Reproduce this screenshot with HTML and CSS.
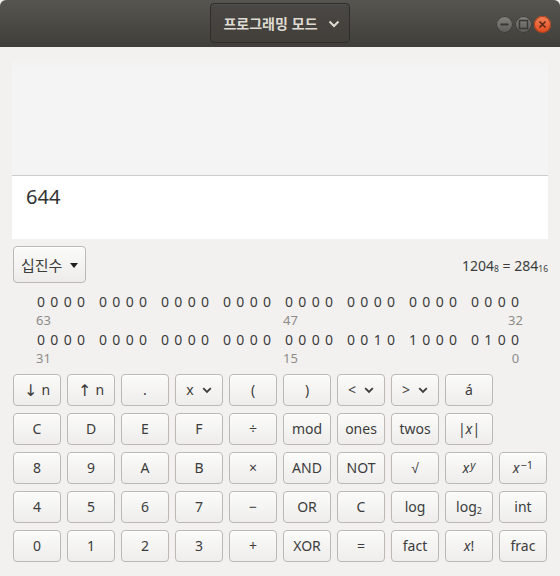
FILE: index.html
```html
<!DOCTYPE html>
<html lang="ko">
<head>
<meta charset="utf-8">
<link rel="stylesheet" href="styles.css">
</head>
<body>
<div class="window">
  <header class="titlebar">
    <div class="title-btn">
      <span class="title-text">프로그래밍 모드</span>
      <svg class="title-chev" width="12" height="8" viewBox="0 0 12 8"><path d="M1.5 1.5 L6 6 L10.5 1.5" fill="none" stroke="#dfdbd2" stroke-width="2"/></svg>
    </div>
    <div class="wm">
      <span class="wm-btn wm-grey"><svg width="17" height="17" viewBox="0 0 17 17"><path d="M4.5 8.5 H12.5" stroke="#3a3935" stroke-width="2"/></svg></span>
      <span class="wm-btn wm-grey"><svg width="17" height="17" viewBox="0 0 17 17"><rect x="4.5" y="4.5" width="8" height="8" fill="none" stroke="#3a3935" stroke-width="1.5"/></svg></span>
      <span class="wm-btn wm-close"><svg width="17" height="17" viewBox="0 0 17 17"><path d="M5.5 5.5 L11.5 11.5 M11.5 5.5 L5.5 11.5" stroke="#5a2a17" stroke-width="1.6"/></svg></span>
    </div>
  </header>

  <main class="content">
    <section class="display">
      <div class="history"></div>
      <div class="entry">644</div>
    </section>

    <div class="base-row">
      <div class="base-btn">십진수<span class="tri"></span></div>
      <div class="conv">1204<sub>8</sub> = 284<sub>16</sub></div>
    </div>

    <div class="bits">
      <div class="bit-row">
        <span class="grp"><i>0</i><i>0</i><i>0</i><i>0</i></span><span class="grp"><i>0</i><i>0</i><i>0</i><i>0</i></span><span class="grp"><i>0</i><i>0</i><i>0</i><i>0</i></span><span class="grp"><i>0</i><i>0</i><i>0</i><i>0</i></span><span class="grp"><i>0</i><i>0</i><i>0</i><i>0</i></span><span class="grp"><i>0</i><i>0</i><i>0</i><i>0</i></span><span class="grp"><i>0</i><i>0</i><i>0</i><i>0</i></span><span class="grp"><i>0</i><i>0</i><i>0</i><i>0</i></span>
      </div>
      <div class="lbl-row"><span>63</span><span>47</span><span class="r">32</span></div>
      <div class="bit-row">
        <span class="grp"><i>0</i><i>0</i><i>0</i><i>0</i></span><span class="grp"><i>0</i><i>0</i><i>0</i><i>0</i></span><span class="grp"><i>0</i><i>0</i><i>0</i><i>0</i></span><span class="grp"><i>0</i><i>0</i><i>0</i><i>0</i></span><span class="grp"><i>0</i><i>0</i><i>0</i><i>0</i></span><span class="grp"><i>0</i><i>0</i><i>1</i><i>0</i></span><span class="grp"><i>1</i><i>0</i><i>0</i><i>0</i></span><span class="grp"><i>0</i><i>1</i><i>0</i><i>0</i></span>
      </div>
      <div class="lbl-row"><span>31</span><span>15</span><span class="r">0</span></div>
    </div>

    <div class="keys">
      <button class="key"><span class="arrow">↓</span>n</button>
      <button class="key"><span class="arrow">↑</span>n</button>
      <button class="key">.</button>
      <button class="key">x <svg class="chev" width="10" height="7" viewBox="0 0 10 7"><path d="M1.2 1.2 L5 5 L8.8 1.2" fill="none" stroke="#3c3c3c" stroke-width="1.8"/></svg></button>
      <button class="key">(</button>
      <button class="key">)</button>
      <button class="key">&lt; <svg class="chev" width="10" height="7" viewBox="0 0 10 7"><path d="M1.2 1.2 L5 5 L8.8 1.2" fill="none" stroke="#3c3c3c" stroke-width="1.8"/></svg></button>
      <button class="key">&gt; <svg class="chev" width="10" height="7" viewBox="0 0 10 7"><path d="M1.2 1.2 L5 5 L8.8 1.2" fill="none" stroke="#3c3c3c" stroke-width="1.8"/></svg></button>
      <button class="key">á</button>
      <span class="blank"></span>

      <button class="key">C</button>
      <button class="key">D</button>
      <button class="key">E</button>
      <button class="key">F</button>
      <button class="key">÷</button>
      <button class="key">mod</button>
      <button class="key">ones</button>
      <button class="key">twos</button>
      <button class="key">|<em>x</em>|</button>
      <span class="blank"></span>

      <button class="key">8</button>
      <button class="key">9</button>
      <button class="key">A</button>
      <button class="key">B</button>
      <button class="key">×</button>
      <button class="key">AND</button>
      <button class="key">NOT</button>
      <button class="key">√</button>
      <button class="key"><em>x</em><sup><em>y</em></sup></button>
      <button class="key"><em>x</em><sup>−1</sup></button>

      <button class="key">4</button>
      <button class="key">5</button>
      <button class="key">6</button>
      <button class="key">7</button>
      <button class="key">−</button>
      <button class="key">OR</button>
      <button class="key">C</button>
      <button class="key">log</button>
      <button class="key">log<small>2</small></button>
      <button class="key">int</button>

      <button class="key">0</button>
      <button class="key">1</button>
      <button class="key">2</button>
      <button class="key">3</button>
      <button class="key">+</button>
      <button class="key">XOR</button>
      <button class="key">=</button>
      <button class="key">fact</button>
      <button class="key"><em>x</em>!</button>
      <button class="key">frac</button>
    </div>
  </main>
</div>
</body>
</html>
```

FILE: styles.css
```css
* { box-sizing: border-box; }
html, body { margin: 0; padding: 0; }
body {
  width: 560px;
  height: 576px;
  overflow: hidden;
  background: #f2f1f0;
  font-family: "Noto Sans", "Noto Sans CJK KR", sans-serif;
  color: #3c3c3c;
}
.window { width: 560px; height: 576px; background: #f2f1f0; }

.titlebar {
  height: 47px;
  background: linear-gradient(#57554f, #3f3e3a);
  border-radius: 6px 6px 0 0;
  display: flex;
  align-items: center;
  justify-content: center;
  position: relative;
}
.title-btn {
  width: 140px;
  height: 40px;
  margin-top: -1px;
  margin-left: -1px;
  border: 1px solid #2e2d2a;
  border-radius: 4px;
  background: linear-gradient(#4a4844, #423f3b);
  box-shadow: inset 0 1px rgba(255,255,255,0.06);
  display: flex;
  align-items: center;
  justify-content: center;
  gap: 10px;
  padding-left: 4px;
}
.title-text {
  font-family: "Noto Sans CJK KR", sans-serif;
  font-weight: 700;
  font-size: 14px;
  color: #dfdbd2;
}
.title-chev { display: block; margin-top: 1px; }

.wm {
  position: absolute;
  right: 9px;
  top: 16px;
  display: flex;
  gap: 2px;
}
.wm-btn {
  width: 17px;
  height: 17px;
  border-radius: 50%;
  display: block;
}
.wm-btn svg { display: block; }
.wm-grey {
  background: linear-gradient(#85837e, #5d5b57);
  box-shadow: inset 0 0 0 1px #3b3a36;
}
.wm-close {
  background: linear-gradient(#f4825a, #df4a1c);
  box-shadow: inset 0 0 0 1px #a8401d;
}

.content { padding: 10px 12px 0 12px; }

.display { background: #fff; }
.history {
  height: 119px;
  background: linear-gradient(#f2f1f0, #f4f4f4 12px);
  border-bottom: 1px solid #cfcdcb;
}
.entry {
  height: 63px;
  padding: 7px 0 0 14px;
  font-size: 20px;
  line-height: 28px;
  color: #333;
}

.base-row {
  margin-top: 7px;
  height: 37px;
  display: flex;
  align-items: center;
  justify-content: space-between;
}
.base-btn {
  width: 73px;
  height: 37px;
  margin-left: 1px;
  border: 1px solid #bcb9b4;
  border-radius: 4px;
  background: linear-gradient(#fbfbfa, #edecea);
  box-shadow: inset 0 1px #fff;
  font-family: "Noto Sans CJK KR", sans-serif;
  font-size: 15px;
  display: flex;
  align-items: center;
  padding-left: 7px;
  color: #3c3c3c;
}
.tri {
  display: inline-block;
  width: 0; height: 0;
  border-left: 4.5px solid transparent;
  border-right: 4.5px solid transparent;
  border-top: 5px solid #1e1e1e;
  margin-left: 8px;
  margin-top: 1px;
}
.conv {
  font-size: 14px;
  color: #3c3c3c;
  margin-top: 1px;
}
.conv sub { font-size: 8.5px; vertical-align: baseline; position: relative; top: 1px; }

.bits { margin-top: 9px; padding-left: 25px; }
.bit-row {
  height: 19px;
  line-height: 19px;
  font-size: 14px;
  display: flex;
  color: #3c3c3c;
}
.grp { display: flex; width: 62px; }
.grp i { font-style: normal; width: 13.33px; }
.lbl-row {
  height: 19px;
  line-height: 19px;
  font-size: 13px;
  color: #8e8b88;
  display: grid;
  grid-template-columns: 247px 222.5px 20px;
  margin-left: -1px;
}
.lbl-row .r { text-align: center; }

.keys {
  margin-top: 6px;
  margin-left: 1px;
  display: grid;
  grid-template-columns: repeat(10, 48px);
  grid-auto-rows: 32px;
  column-gap: 6px;
  row-gap: 7px;
}
.key {
  border: 1px solid #bcb9b4;
  border-radius: 4px;
  background: linear-gradient(#fbfbfa, #eeedeb);
  box-shadow: inset 0 1px #fff;
  font-family: "Noto Sans", sans-serif;
  font-size: 14px;
  color: #3c3c3c;
  padding: 0;
  margin: 0;
  display: flex;
  align-items: center;
  justify-content: center;
  line-height: 1;
}
.key .arrow { font-size: 16px; margin-right: 4px; font-family: "Noto Sans", "DejaVu Sans", sans-serif; }
.key .chev { margin-left: 8px; display: block; }
.key em { font-style: italic; }
.key sup { font-size: 11px; position: relative; top: -4px; vertical-align: baseline; margin-left: 1px; }
.key small { font-size: 9px; position: relative; top: 3px; }
```
